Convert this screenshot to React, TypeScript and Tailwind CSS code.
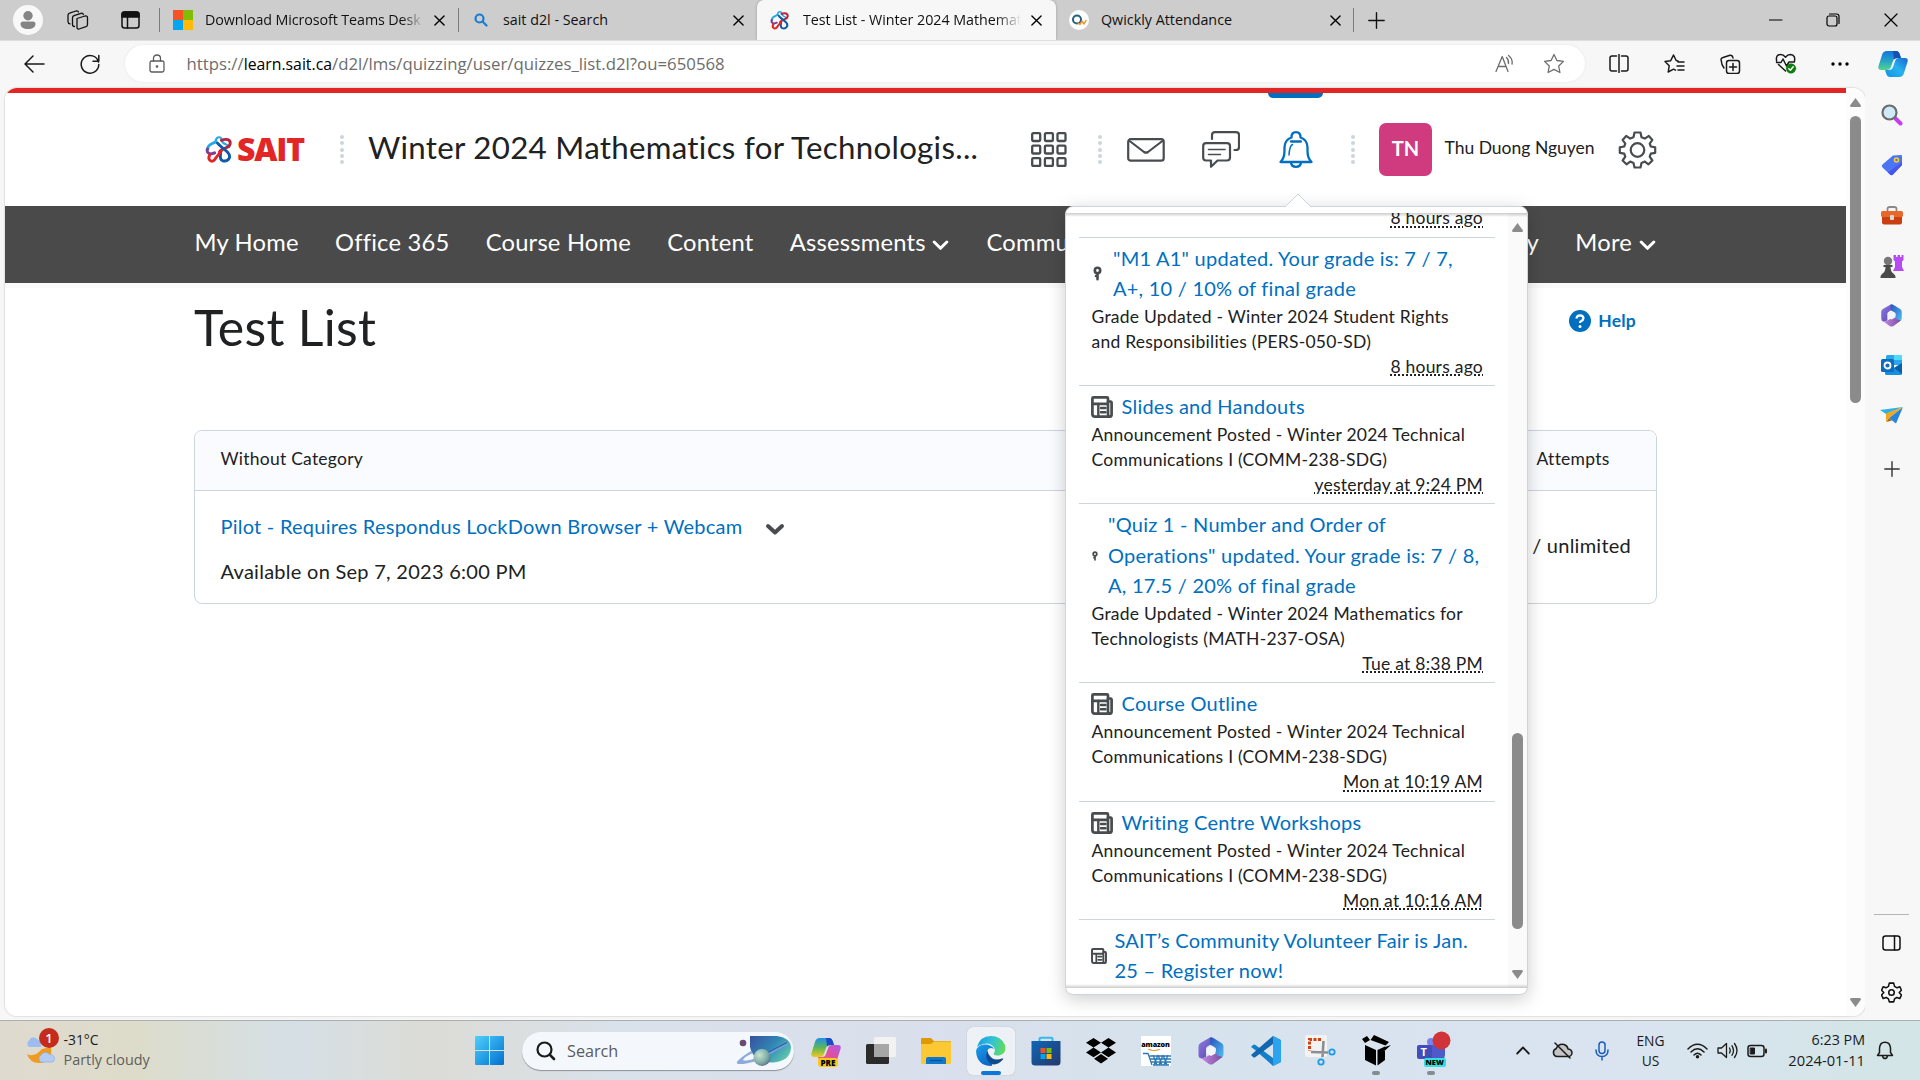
import React from "react";

type IconProps = {
  w: number;
  h: number;
  box?: string;
  children: React.ReactNode;
  className?: string;
  sw?: number;
};

function Icon({ w, h, box, children, className = "", sw = 1.4 }: IconProps) {
  return (
    <svg
      width={w}
      height={h}
      viewBox={box ?? `0 0 ${w} ${h}`}
      fill="none"
      stroke="currentColor"
      strokeWidth={sw}
      strokeLinecap="round"
      strokeLinejoin="round"
      className={`shrink-0 ${className}`}
    >
      {children}
    </svg>
  );
}

function SaitMark({ w, h }: { w: number; h: number }) {
  return (
    <Icon w={w} h={h} box="0 0 28 28" sw={3}>
      <path d="M3 14 C2 9 8 9 11.500 6" stroke="#27a9e1" />
      <path d="M11 7 C11 1 17 0 17.500 5 C18 10 24 8 25 12" stroke="#27a9e1" strokeWidth="2.200" />
      <path d="M17 5 C22 3 27 4 26 9 C25 14 18 12 15 17" stroke="#b5253c" />
      <path d="M2.500 14 C1 19 6 20 10 18" stroke="#7b3f98" />
      <path d="M13 8 C16 12 21 14 24 18 C28 23 23 28 18 26 C14 24 17 20 16 17" stroke="#0e5ca8" />
      <path d="M5 20 C2 25 7 29 10 25 C12 22 14 20 17 16" stroke="#e32526" />
    </Icon>
  );
}

function CloseX({ s = 11 }: { s?: number }) {
  return (
    <Icon w={s} h={s} box="0 0 12 12" sw={1.5} className="text-black">
      <path d="M1 1 L11 11 M11 1 L1 11" />
    </Icon>
  );
}

function TabBar() {
  return (
    <div className="flex h-10 shrink-0 items-center bg-[#cdcdcd] text-[14.3px] text-[#111]">
      <div className="ml-[13px] flex h-[30px] w-[30px] items-center justify-center rounded-full bg-[#f8f8f8]">
        <svg width="16" height="18" viewBox="0 0 16 18" fill="#858585">
          <circle cx="8" cy="4.7" r="4.7" />
          <path d="M3 10.5h10a2.5 2.5 0 0 1 2.5 2.5c0 3-3 5-7.500 5S.5 16 .5 13A2.500 2.500 0 0 1 3 10.500z" />
        </svg>
      </div>
      <Icon w={22} h={20} className="ml-[24px] text-[#111]" sw={1.3}>
        <path d="M10 8.500 L18 6 Q20.500 5.500 20.500 7.800 V14.500 Q20.500 16 19 16.600 L12 19 Q10 19.400 10 17.500 Z" />
        <path d="M7.500 16.500 Q5.500 16.500 5.500 14.500 V8 Q5.500 6.300 7 5.700 L14 3.300 Q16 2.800 16.300 4.500" />
        <path d="M3 13.800 Q1 13.500 1 11.500 V5.500 Q1 3.700 2.600 3.200 L9 1 Q11 .5 11.500 2" />
      </Icon>
      <Icon w={19} h={18} className="ml-[32px] text-[#111]" sw={1.5}>
        <rect x="1" y="1" width="17" height="16" rx="2.500" />
        <path d="M1 3.500 Q1 1 3.500 1 H15.500 Q18 1 18 3.500 V6 H1 Z" fill="currentColor" />
        <path d="M6.500 6 V17" />
      </Icon>
      <div className="ml-[19px] h-6 w-px bg-[#7c7c7c]" />
      <div className="ml-[13px] grid h-5 w-5 grid-cols-2 grid-rows-2">
        <i className="bg-[#f35325]" />
        <i className="bg-[#81bc06]" />
        <i className="bg-[#05a6f0]" />
        <i className="bg-[#ffba08]" />
      </div>
      <div className="ml-3 w-[218px] overflow-hidden whitespace-nowrap bg-linear-to-r from-[#111] from-90% to-[#cdcdcd] bg-clip-text tracking-[-0.1px] text-transparent">
        Download Microsoft Teams Desk
      </div>
      <div className="ml-[11px]">
        <CloseX />
      </div>
      <div className="ml-[13px] h-6 w-px bg-[#7c7c7c]" />
      <Icon w={14} h={14} className="ml-[15px] text-[#1b7cd3]" sw={2.200}>
        <circle cx="5.500" cy="5.500" r="4" />
        <path d="M8.800 8.800 L12.500 12.500" />
      </Icon>
      <div className="ml-[15px] w-[229px]">sait d2l - Search</div>
      <div className="ml-px">
        <CloseX />
      </div>
      <div className="ml-[13px] flex h-10 w-[299px] items-center rounded-t-[7px] bg-[#f7f7f7] shadow-[0_0_3px_rgba(0,0,0,0.25)]">
        <div className="ml-[13px]">
          <SaitMark w={19} h={20} />
        </div>
        <div className="ml-[14px] w-[218px] overflow-hidden whitespace-nowrap bg-linear-to-r from-[#111] from-88% to-[#f7f7f7] bg-clip-text tracking-[-0.04px] text-transparent">
          Test List - Winter 2024 Mathemat
        </div>
        <div className="ml-[10px]">
          <CloseX />
        </div>
      </div>
      <div className="ml-[13px] flex h-5 w-5 items-center justify-center rounded-full bg-white">
        <Icon w={16} h={12} sw={2}>
          <circle cx="6" cy="5.500" r="4" stroke="#24607f" />
          <path d="M7 9 L9 10.500 L11 7 L13 10 L15 6.500" stroke="#f0912d" strokeWidth="1.500" />
        </Icon>
      </div>
      <div className="ml-3 w-[228px]">Qwickly Attendance</div>
      <div className="ml-px">
        <CloseX />
      </div>
      <div className="ml-[12px] h-6 w-px bg-[#7c7c7c]" />
      <Icon w={17} h={17} className="ml-[14px] text-[#111]">
        <path d="M8.500 .8 V16.200 M.8 8.500 H16.200" />
      </Icon>
      <Icon w={14} h={14} className="ml-auto text-black" sw={1.2}>
        <path d="M.5 7 H13" />
      </Icon>
      <Icon w={14} h={14} className="ml-[43px] text-black" sw={1.2}>
        <rect x="1" y="3" width="10" height="10" rx="2" />
        <path d="M3.500 1 H10.500 Q13 1 13 3.500 V10.500" />
      </Icon>
      <Icon w={14} h={14} className="ml-[44px] mr-[22px] text-black" sw={1.200}>
        <path d="M1 1 L13 13 M13 1 L1 13" />
      </Icon>
    </div>
  );
}

function CopilotMark({ pre = false }: { pre?: boolean }) {
  return (
    <svg width="30" height="28" viewBox="0 0 30 28" className="shrink-0">
      <defs>
        <linearGradient id={pre ? "ca1" : "ca"} x1="0" y1="0" x2="0" y2="1">
          <stop offset="0" stopColor={pre ? "#1f8fe8" : "#1273dc"} />
          <stop offset=".5" stopColor={pre ? "#5bb65a" : "#25a0c9"} />
          <stop offset="1" stopColor={pre ? "#f3c91c" : "#52d68d"} />
        </linearGradient>
        <linearGradient id={pre ? "cb1" : "cb"} x1="1" y1="0" x2="0" y2="1">
          <stop offset="0" stopColor={pre ? "#b05be8" : "#1b66d2"} />
          <stop offset=".5" stopColor={pre ? "#e0509b" : "#27b3ee"} />
          <stop offset="1" stopColor={pre ? "#f5803c" : "#138fe5"} />
        </linearGradient>
      </defs>
      <path d="M9 1 H18 Q21 1 22 5 L23 8 H19 Q16 8 15 11 L12.500 18 Q12 20 9 20 H3 Q-.5 20 .5 16 L4 5 Q5 1 9 1Z" fill={`url(#${pre ? "ca1" : "ca"})`} />
      <path d="M21 27 H12 Q9 27 8 23 L7 20 H11 Q14 20 15 17 L17.500 10 Q18 8 21 8 H27 Q30.500 8 29.500 12 L26 23 Q25 27 21 27Z" fill={`url(#${pre ? "cb1" : "cb"})`} />
      <path d="M15 1 H18 Q21 1 22 5 L23 8 H19 Q17 8 16 9.500 Z" fill={pre ? "#1b49c9" : "#174fb5"} />
    </svg>
  );
}

function Toolbar() {
  return (
    <div className="flex h-12 shrink-0 items-center border-t border-[#dedede] bg-[#f7f7f7] pb-[2px] text-[#1a1a1a]">
      <Icon w={21} h={18} className="ml-[24px]" sw={1.5}>
        <path d="M20 9 H1 M9 1 L1 9 L9 17" />
      </Icon>
      <Icon w={20} h={20} className="ml-[35px]" sw={1.500}>
        <path d="M18.500 8 A8.800 8.800 0 1 0 18.800 10.500 M18.800 1.500 V7.300 H13" />
      </Icon>
      <div className="ml-[25px] flex h-[37px] w-[1460px] items-center rounded-full bg-white text-[16.75px] text-[#6d6d6d] shadow-[0_0_3px_rgba(0,0,0,0.08)]">
        <Icon w={16} h={19} className="ml-[24px] text-[#5c5c5c]" sw={1.300}>
          <rect x="1" y="7" width="14" height="11" rx="1.800" />
          <path d="M4.500 7 V4.500 Q4.500 1 8 1 T11.500 4.500 V7" />
          <circle cx="8" cy="12.500" r=".7" fill="currentColor" />
        </Icon>
        <div className="ml-[21.500px] whitespace-pre">
          https://<span className="text-[15.8px] text-black">learn.sait.ca</span>
          <span className="tracking-[0.020px]">/d2l/lms/quizzing/user/quizzes_list.d2l?ou=650568</span>
        </div>
        <Icon w={20} h={19} className="ml-auto text-[#6d6d6d]" sw={1.300}>
          <path d="M1 17.500 L7.200 2.500 L13 17.500 M3.200 12.500 H11" />
          <path d="M11.500 3.500 Q14 6 13.500 9.500 M13.500 1.500 Q18 5 17 10" />
        </Icon>
        <Icon w={22} h={21} className="ml-[28px] mr-[20px] text-[#6d6d6d]" sw={1.300}>
          <path d="M11 1.500 L13.900 7.500 L20.500 8.400 L15.700 13 L16.900 19.500 L11 16.400 L5.100 19.500 L6.300 13 L1.500 8.400 L8.100 7.500Z" />
        </Icon>
      </div>
      <Icon w={20} h={19} className="ml-[24px]" sw={1.500}>
        <path d="M7.500 2 H3 Q1 2 1 4 V15 Q1 17 3 17 H7.500 M12.500 2 H17 Q19 2 19 4 V15 Q19 17 17 17 H12.500 M10 .5 V18.500" />
      </Icon>
      <Icon w={21} h={20} className="ml-[35px]" sw={1.500}>
        <path d="M14 7 L12.200 6.500 L9.500 1 L6.700 6.700 L1 7.500 L5.200 11.800 L4.200 18 L9.500 15.200 L11.500 16.200 M14 8 H20 M13 12 H20 M14 16 H20" />
      </Icon>
      <Icon w={21} h={20} className="ml-[35px]" sw={1.500}>
        <rect x="6.500" y="6.500" width="13" height="13" rx="2.500" />
        <path d="M13 9.500 V16.500 M9.500 13 H16.500 M4 14 Q1.500 11 1 5.500 Q1 4 3 3.500 L10 1.200 Q12.500 1 13 4" />
      </Icon>
      <Icon w={22} h={21} className="ml-[34px]" sw={1.500}>
        <path d="M10.500 18 L3.500 11.500 M1.600 8 Q.5 1.500 5.500 1.500 Q8.500 1.500 10.500 4.200 Q12.500 1.500 15.500 1.500 Q21 2 19.300 9 M1.500 9.500 H6 L8 6 L11.500 13 L14 9 H19" />
        <circle cx="16" cy="15.500" r="4.800" fill="#107c10" stroke="#107c10" strokeWidth=".5" />
        <path d="M13.800 15.700 L15.400 17.200 L18.200 13.800" stroke="#fff" />
      </Icon>
      <svg width="18" height="4" viewBox="0 0 18 4" className="ml-[34px] shrink-0">
        <circle cx="2" cy="2" r="1.700" />
        <circle cx="9" cy="2" r="1.700" />
        <circle cx="16" cy="2" r="1.700" />
      </svg>
      <div className="ml-[29px]">
        <CopilotMark />
      </div>
    </div>
  );
}

function Dots() {
  return (
    <div className="flex w-1 shrink-0 flex-col gap-[2.300px]">
      <i className="h-1 w-1 rounded-full bg-[#cdd5dc]" />
      <i className="h-1 w-1 rounded-full bg-[#cdd5dc]" />
      <i className="h-1 w-1 rounded-full bg-[#cdd5dc]" />
      <i className="h-1 w-1 rounded-full bg-[#cdd5dc]" />
      <i className="h-1 w-1 rounded-full bg-[#cdd5dc]" />
    </div>
  );
}

function Header() {
  return (
    <div className="flex h-[113px] shrink-0 items-center bg-white pl-[200px] text-[#494c4e]">
      <div className="flex w-[99px] shrink-0 items-center pb-[2px]">
        <SaitMark w={27} h={28} />
        <span className="ml-[5px] font-['Open_Sans'] text-[32px] leading-8 font-extrabold tracking-[-1.200px] text-[#e32526]">SAIT</span>
      </div>
      <div className="ml-[36px]">
        <Dots />
      </div>
      <div className="ml-[24px] w-[611px] shrink-0 pb-[5px] text-[31.250px] leading-10 tracking-[0.290px] whitespace-nowrap text-[#202122]">
        Winter 2024 Mathematics for Technologis...
      </div>
      <Icon w={36} h={35} className="ml-[52px]" sw={2.300}>
        {[1.200, 13.700, 26.200].map((y) =>
          [1.200, 13.900, 26.500].map((x) => <rect key={`${x}-${y}`} x={x} y={y} width="8" height="7.800" rx="1" />)
        )}
      </Icon>
      <div className="ml-[31px]">
        <Dots />
      </div>
      <Icon w={38} h={24} className="ml-[25px]" sw={2.200}>
        <rect x="1.200" y="1.200" width="35.500" height="21.500" rx="2.500" />
        <path d="M2 2.500 L17 14 Q19 15.300 21 14 L36 2.500" />
      </Icon>
      <Icon w={38} h={37} className="ml-[37px]" sw={2.200}>
        <path d="M10 8 V4 Q10 1.200 13 1.200 H34 Q37 1.200 37 4 V16 Q37 19 34 19 H32.500" />
        <path d="M4 12.200 H25 Q28 12.200 28 15 V26.500 Q28 29.500 25 29.500 H15.500 L9 35.800 V29.500 H4 Q1.200 29.500 1.200 26.500 V15 Q1.200 12.200 4 12.200Z" />
        <path d="M6.500 18.500 H23 M6.500 23.500 H18.500" strokeWidth="1.600" />
      </Icon>
      <Icon w={34} h={37} className="ml-[39px] text-[#006fbf]" sw={2.300}>
        <path d="M1.500 31 Q5.500 27 5.500 20 V16 Q6 8.500 12.500 6.500 Q12.500 1.200 17 1.200 T21.500 6.500 Q28 8.500 28.500 16 V20 Q28.500 27 32.500 31 Z" />
        <path d="M12 31.500 Q12.500 35.800 17 35.800 T22 31.500 M12 10.500 H22" />
        <path d="M10 24 Q10.500 15 13.500 13.500" strokeWidth="1.500" />
      </Icon>
      <div className="ml-[38px]">
        <Dots />
      </div>
      <div className="ml-[24px] flex h-[53px] w-[53px] shrink-0 items-center justify-center rounded-[7px] bg-[#d03a7f] pb-1 text-[20px] font-bold text-white">
        TN
      </div>
      <div className="ml-[12.500px] w-[149.500px] shrink-0 pb-[3px] text-[17.500px] whitespace-nowrap text-[#202122]">Thu Duong Nguyen</div>
      <Icon w={39} h={38} box="0 0 38 38" className="ml-[24px]" sw={2.200}>
        <circle cx="19" cy="19" r="6.800" />
        <path d="M16 1.500 H22 L23 6.200 L26.300 7.600 L30.300 4.900 L33.900 8.900 L31.200 12.700 L32.300 15.500 L36.700 16.300 V21.800 L32.300 22.700 L31.200 25.600 L33.900 29.500 L30 33.300 L26.300 30.600 L23 32 L22 36.500 H16 L15 32 L11.700 30.600 L8 33.300 L4.100 29.500 L6.800 25.600 L5.700 22.700 L1.300 21.800 V16.300 L5.700 15.500 L6.800 12.700 L4.100 8.900 L7.700 4.900 L11.700 7.600 L15 6.200 Z" />
      </Icon>
    </div>
  );
}

function Chevron({ className = "" }: { className?: string }) {
  return (
    <Icon w={17} h={11} sw={3} className={className}>
      <path d="M2.200 2 L8.500 8.300 L14.800 2" />
    </Icon>
  );
}

function NavBar() {
  return (
    <div className="flex h-[77px] shrink-0 items-center gap-[36.300px] bg-[#4a4a4a] pr-[190px] pb-[4px] pl-[189.500px] text-[23.750px] tracking-[0.200px] whitespace-nowrap text-white">
      <span>My Home</span>
      <span>Office 365</span>
      <span>Course Home</span>
      <span>Content</span>
      <span className="flex items-center">
        Assessments
        <Chevron className="mt-[6px] mr-[1.500px] ml-[6px]" />
      </span>
      <span>Community</span>
      <span className="ml-auto">y</span>
      <span className="flex items-center">
        More
        <Chevron className="mt-[6px] ml-[7px]" />
      </span>
    </div>
  );
}

function QuizTable() {
  return (
    <div className="mx-[189px] mt-[73px] overflow-hidden rounded-lg border border-[#cdd5dc]">
      <div className="flex h-[60px] items-center justify-between border-b border-[#cdd5dc] bg-[#f9fbff] pr-[46.500px] pb-[3px] pl-[25.500px] text-[17.500px] tracking-[0.240px]">
        <span>Without Category</span>
        <span>Attempts</span>
      </div>
      <div className="flex h-[112px] items-center justify-between pr-[25px] pl-[25.500px] text-[20px] tracking-[0.240px]">
        <div className="flex flex-col gap-[15px] pt-[2px]">
          <div className="flex items-center text-[#006fbf]">
            Pilot - Requires Respondus LockDown Browser + Webcam
            <Icon w={20} h={13} sw={4} className="mt-[8px] ml-[23px] text-[#494c4e]">
              <path d="M3 3 L10 9.500 L17 3" />
            </Icon>
          </div>
          <div className="tracking-[0.270px]">Available on Sep 7, 2023 6:00 PM</div>
        </div>
        <span className="pb-[5px]">/ unlimited</span>
      </div>
    </div>
  );
}

type Note = { kind: "news" | "grade"; size: number; title: string[]; desc: string[]; time: string };

const notes: Note[] = [
  {
    kind: "grade",
    size: 15,
    title: ['"M1 A1" updated. Your grade is: 7 / 7,', "A+, 10 / 10% of final grade"],
    desc: ["Grade Updated - Winter 2024 Student Rights", "and Responsibilities (PERS-050-SD)"],
    time: "8 hours ago",
  },
  {
    kind: "news",
    size: 22,
    title: ["Slides and Handouts"],
    desc: ["Announcement Posted - Winter 2024 Technical", "Communications I (COMM-238-SDG)"],
    time: "yesterday at 9:24 PM",
  },
  {
    kind: "grade",
    size: 10,
    title: ['"Quiz 1 - Number and Order of', 'Operations" updated. Your grade is: 7 / 8,', "A, 17.5 / 20% of final grade"],
    desc: ["Grade Updated - Winter 2024 Mathematics for", "Technologists (MATH-237-OSA)"],
    time: "Tue at 8:38 PM",
  },
  {
    kind: "news",
    size: 22,
    title: ["Course Outline"],
    desc: ["Announcement Posted - Winter 2024 Technical", "Communications I (COMM-238-SDG)"],
    time: "Mon at 10:19 AM",
  },
  {
    kind: "news",
    size: 22,
    title: ["Writing Centre Workshops"],
    desc: ["Announcement Posted - Winter 2024 Technical", "Communications I (COMM-238-SDG)"],
    time: "Mon at 10:16 AM",
  },
];

function NewsIcon({ size }: { size: number }) {
  return (
    <Icon w={size} h={size} box="0 0 22 22" sw={2.700} className="mt-[2px] text-[#494c4e]">
      <path d="M1.400 2.500 Q1.400 1.400 2.500 1.400 H16 Q17 1.400 17 2.500 V18 Q17 20.600 19 20.600 H4 Q1.400 20.600 1.400 18 Z" />
      <path d="M17 5.500 H19.500 Q20.600 5.500 20.600 7 V18.500 Q20.600 20.600 19 20.600" />
      <path d="M1.500 7.800 H16.500" />
      <path d="M7.300 8 V20 M10 12 H14.500 M10 16.200 H14.500" strokeWidth="2.400" />
    </Icon>
  );
}

function PinIcon({ size }: { size: number }) {
  return (
    <Icon w={Math.round(size * 0.62)} h={size} box="0 0 9 14" sw={2.600} className="mt-[2px] text-[#494c4e]">
      <circle cx="4.500" cy="4" r="2.700" />
      <path d="M4.500 7 V12.700 M3 9.500 H4.500" />
    </Icon>
  );
}

function Time({ children }: { children: string }) {
  return (
    <div className="flex h-[25px] items-center justify-end">
      <span className="underline decoration-dotted decoration-2 underline-offset-[2px]">{children}</span>
    </div>
  );
}

function NoteTitle({ kind, size, lines }: { kind: "news" | "grade"; size: number; lines: string[] }) {
  const lead = kind === "news" ? (size > 18 ? "w-[30.500px]" : "w-[23.500px]") : size > 10 ? "w-[22px] pl-[2px]" : "w-[17px] pl-[1px]";
  return (
    <div className="flex items-center text-[20px] leading-[30.200px] tracking-[0.240px] text-[#006fbf]">
      <span className={`flex shrink-0 ${lead}`}>{kind === "news" ? <NewsIcon size={size} /> : <PinIcon size={size} />}</span>
      <span>
        {lines.map((l) => (
          <span key={l} className="block whitespace-nowrap">
            {l}
          </span>
        ))}
      </span>
    </div>
  );
}

function ScrollArrow({ up = false }: { up?: boolean }) {
  return (
    <svg width="11" height="9" viewBox="0 0 11 9" className="shrink-0">
      <path d={up ? "M5.500 0 L11 7.500 Q11 9 9.500 9 H1.500 Q0 9 0 7.500 Z" : "M5.500 9 L11 1.500 Q11 0 9.500 0 H1.500 Q0 0 0 1.500 Z"} fill="#8b8b8b" />
    </svg>
  );
}

function Alerts() {
  return (
    <div className="absolute top-[118px] left-[1060px] z-10 flex h-[789px] w-[463px] flex-col rounded-lg border border-[#cdd5dc] bg-white shadow-[0_4px_18px_rgba(0,0,0,0.2)]">
      <svg width="28" height="15" viewBox="0 0 28 15" className="absolute -top-[14px] left-[218px]">
        <path d="M1 14 L14 1 L27 14 V15 H1Z" fill="#fff" />
        <path d="M1 14 L14 1 L27 14" fill="none" stroke="#cdd5dc" />
      </svg>
      <div className="h-[6px] shrink-0" />
      <div className="relative flex h-[775px] shrink-0 overflow-hidden">
        <div className="w-[442px] pl-[13px] text-[17.500px] leading-[25px] tracking-[0.235px] text-[#202122]">
          <div className="flex h-[24.500px] w-[416px] flex-col justify-end border-b border-[#cdd5dc] pr-[12px] pb-[6.500px] pl-[10px]">
            <Time>8 hours ago</Time>
          </div>
          {notes.map((n) => (
            <div key={n.title[0]} className="w-[416px] border-b border-[#cdd5dc] pt-[5px] pr-[12px] pb-[6.500px] pl-[12px]">
              <NoteTitle kind={n.kind} size={n.size} lines={n.title} />
              <div className="mt-[0.700px] pl-[0.500px]">
                {n.desc.map((d) => (
                  <div key={d} className="whitespace-nowrap">
                    {d}
                  </div>
                ))}
              </div>
              <Time>{n.time}</Time>
            </div>
          ))}
          <div className="pt-[5px] pl-[12px]">
            <NoteTitle kind="news" size={16} lines={["SAIT’s Community Volunteer Fair is Jan.", "25 – Register now!"]} />
          </div>
        </div>
        <div className="flex w-[19px] flex-col items-center bg-[#fafafa] pt-[10px] pr-[1px] pb-[9px]">
          <ScrollArrow up />
          <div className="mt-[501px] h-[196px] w-[11px] rounded-full bg-[#8b8b8b]" />
          <div className="mt-auto">
            <ScrollArrow />
          </div>
        </div>
        <div className="absolute inset-x-0 top-0 h-1 bg-linear-to-b from-black/20 to-transparent" />
        <div className="absolute inset-x-0 bottom-0 h-1 bg-linear-to-t from-black/20 to-transparent" />
      </div>
    </div>
  );
}

function Office({ s }: { s: number }) {
  return (
    <svg width={s} height={s} viewBox="0 0 28 28" className="shrink-0">
      <defs>
        <linearGradient id="o1" x1="0" y1="0" x2="1" y2="1">
          <stop offset="0" stopColor="#8f7be0" />
          <stop offset="1" stopColor="#5a48b0" />
        </linearGradient>
        <linearGradient id="o2" x1="0" y1="0" x2="1" y2="1">
          <stop offset="0" stopColor="#2a4fc0" />
          <stop offset="1" stopColor="#4fc3f0" />
        </linearGradient>
        <linearGradient id="o3" x1="0" y1="0" x2="1" y2="0">
          <stop offset="0" stopColor="#c68be8" />
          <stop offset="1" stopColor="#7a4d9e" />
        </linearGradient>
      </defs>
      <path d="M13 .5 L3.500 6 Q1.500 7.200 1.500 9.500 V18 Q1.500 21 4.500 21.500 L9 20 V12 Q9 10 11 9 L15.500 6.500 V2Z" fill="url(#o1)" />
      <path d="M13 .5 Q14.500 0 16 .8 L24.500 6 Q26.500 7.200 26.500 9.500 V18 Q26 20 24 21 L19 18 V12.500 Q19 10.800 17.500 10 L13 7.500Z" fill="url(#o2)" />
      <path d="M3 20.500 Q6 22 9 20 L19 14.500 V16 Q19 17.500 21 18.500 L25.500 20 L16 27 Q14 28 12 27Z" fill="url(#o3)" />
      <path d="M14 9 L18.500 11.500 V16.500 L14 19 L9.500 16.500 V11.500Z" fill="#f3f4f8" />
    </svg>
  );
}

function Sidebar() {
  return (
    <div className="flex w-[54px] shrink-0 flex-col items-center bg-[#f7f7f7] pt-[16px] pr-[1px]">
      <div className="flex h-[50.200px] items-start">
        <svg width="22" height="22" viewBox="0 0 22 22">
          <path d="M14.500 14.500 L19.500 19.500" stroke="#c63cf0" strokeWidth="4" strokeLinecap="round" />
          <circle cx="8.500" cy="8.500" r="7" fill="#cfe9f8" stroke="#6b6b6b" strokeWidth="2.200" />
        </svg>
      </div>
      <div className="flex h-[50.200px] items-start">
        <svg width="22" height="22" viewBox="0 0 22 22">
          <path d="M12 1.500 L20 1 Q21 1 21 2 V11 L12 20.500 Q10.500 22 9 20.500 L1.500 13.500 Q0 12 1.500 10.500Z" fill="#4b75f5" />
          <path d="M21 8 V11 L12 20.500 Q10.500 22 9 20.500 L7 18.500Z" fill="#4a55ee" />
          <circle cx="15.500" cy="6" r="2" fill="#4b75f5" stroke="#f8cf2c" strokeWidth="1.600" />
        </svg>
      </div>
      <div className="flex h-[49.200px] items-start pt-px">
        <svg width="24" height="22" viewBox="0 0 24 22">
          <path d="M7.500 6 V4 Q7.500 2 9.500 2 H14.500 Q16.500 2 16.500 4 V6" fill="none" stroke="#8a8a8a" strokeWidth="1.800" />
          <rect x="1" y="6" width="22" height="6" rx="1.500" fill="#e8672a" />
          <path d="M2 12 H22 V17.500 Q22 19.500 20 19.500 H4 Q2 19.500 2 17.500Z" fill="#c93f10" />
          <rect x="10" y="10" width="4" height="5" rx="1" fill="#d8d8d8" />
        </svg>
      </div>
      <div className="flex h-[50.200px] items-start">
        <svg width="24" height="25" viewBox="0 0 24 25">
          <path d="M13.500 1 H16 V3 H17.500 V1 H20 V3 H21.500 V1 H23.500 V6 L22 7.500 V13 L24 17 H13 L15 13 V7.500 L13.500 6Z" fill="#b64bf2" />
          <circle cx="8" cy="7" r="4.200" fill="#777" />
          <path d="M3.500 11 H12.500 V13 H10.500 Q10.500 18 14 20 Q16 22 15.500 24 H.5 Q0 22 2 20 Q5.500 18 5.500 13 H3.500Z" fill="#4b4b4b" />
        </svg>
      </div>
      <div className="flex h-[50.200px] items-start">
        <Office s={23} />
      </div>
      <div className="flex h-[50.200px] items-start">
        <svg width="22" height="22" viewBox="0 0 22 22">
          <rect x="5" y="1" width="16" height="10" rx="1.500" fill="#28a8ea" />
          <path d="M13 1 H19.500 Q21 1 21 2.500 V6 H13Z" fill="#50d9ff" />
          <path d="M4 9 L13 14 L21 9 V19.500 Q21 21 19.500 21 H5.500 Q4 21 4 19.500Z" fill="#1490df" />
          <path d="M13 14 L21 9 V20Z" fill="#0a5ea8" />
          <rect x="0" y="5" width="13" height="13" rx="1.500" fill="#0f6cbd" />
          <circle cx="6.500" cy="11.500" r="3" fill="none" stroke="#fff" strokeWidth="1.800" />
        </svg>
      </div>
      <div className="flex h-[55px] items-start">
        <svg width="23" height="22" viewBox="0 0 23 22">
          <path d="M0 6 L23 3 L6 10Z" fill="#30b0e8" />
          <path d="M23 3 L16 19.500 L9 14Z" fill="#2584e0" />
          <path d="M6 9.500 L23 3 L9 14 L6 18Z" fill="#f0a71c" />
          <path d="M6.500 18 L9 14 L12 16.500Z" fill="#a76b0a" />
        </svg>
      </div>
      <Icon w={16} h={16} sw={1.400} className="mt-[2px] text-[#333]">
        <path d="M8 .8 V15.200 M.8 8 H15.200" />
      </Icon>
      <div className="mt-auto h-px w-[35px] bg-[#b5b5b5]" />
      <Icon w={19} h={16} sw={1.500} className="mt-[20px] text-[#111]">
        <rect x="1" y="1" width="17" height="14" rx="2.500" />
        <path d="M12.500 1 V15" />
      </Icon>
      <Icon w={21} h={21} box="0 0 38 38" sw={2.800} className="mt-[31px] mb-[17px] text-[#111]">
        <circle cx="19" cy="19" r="5" />
        <path d="M15 2 H23 L24.500 8 L29 10.500 L34 8.500 L37 15 L33 19 L37 23.500 L34 30 L28.500 28 L24.500 30.500 L23 36 H15 L13.500 30.500 L9.500 28 L4 30 L1 23.500 L5 19 L1 15 L4 8.500 L9 10.500 L13.500 8 Z" />
      </Icon>
    </div>
  );
}

function EdgeLogo() {
  return (
    <svg width="30" height="30" viewBox="0 0 30 30">
      <defs>
        <linearGradient id="e1" x1="0" y1=".3" x2="1" y2=".5">
          <stop offset="0" stopColor="#1a9be0" />
          <stop offset=".5" stopColor="#2fc3d8" />
          <stop offset="1" stopColor="#62dc5a" />
        </linearGradient>
        <linearGradient id="e2" x1="0" y1="0" x2=".6" y2="1">
          <stop offset="0" stopColor="#1ba0e8" />
          <stop offset="1" stopColor="#0a66c8" />
        </linearGradient>
      </defs>
      <path d="M1 11 Q4 0 15 0 Q25 0 29 9 Q31 18 23 19.500 Q19 20 17.500 18 Q20 15 18 11.500 Q14 6 7 8 Q2.500 9.500 1 11Z" fill="url(#e1)" />
      <path d="M0 15 Q1 9.500 8 8.500 Q15 8 18 13 Q13 10.500 11 15 Q9.500 22 16 27 Q17 29 15.500 30 Q1 30 0 15Z" fill="url(#e2)" />
      <path d="M11.500 14 Q8 22 14 27 Q20 31 27 23.500 Q28 22 26 22.500 Q17 26 12.500 18 Q11.500 16 11.500 14Z" fill="#114a8b" />
    </svg>
  );
}

function Slot({ children, active = false, running = false }: { children: React.ReactNode; active?: boolean; running?: boolean }) {
  return (
    <div className="flex w-[55px] shrink-0 justify-center">
      <div className={`relative flex h-12 w-12 items-center justify-center rounded-md ${active ? "bg-white/55 shadow-[0_0_1px_rgba(0,0,0,0.3)]" : ""}`}>
        {children}
        {active && <i className="absolute bottom-0 left-[14px] h-1 w-5 rounded-full bg-[#0a78d6]" />}
        {running && <i className="absolute bottom-0 left-[20px] h-1 w-2 rounded-full bg-[#868b92]" />}
      </div>
    </div>
  );
}

function Taskbar() {
  return (
    <div className="flex h-[60px] shrink-0 items-center border-t border-[#abafb1] bg-[linear-gradient(90deg,#dfdacf_0,#dddcca_130px,#d5dfe5_290px,#dcdcd6_430px,#d9e1ea_620px,#dadfec_900px,#d6e2ec_1150px,#dae4f1_1600px,#d3e5e6_1900px)] text-[14.300px] text-[#1b1b1b]">
      <div className="relative ml-[25px] h-[34px] w-[38.500px] shrink-0">
        <svg width="32" height="30" viewBox="0 0 32 30" className="mt-[2px]">
          <path d="M4 11 A4 4 0 0 1 4 4.500 Q7 -1 12 3 Q16 4 16 11Z" fill="#9dbcf0" />
          <path d="M2 18 Q9 22 17 13 L26 11 Q28 27 14 27 Q5 27 2 18Z" fill="#f09a1f" />
          <path d="M16 26 A4 4 0 0 1 16 19 Q20 14 24 18 Q30 19 29.500 23 Q29 26 27 26Z" fill="#b3ccf4" stroke="#87a7e4" strokeWidth=".6" />
        </svg>
        <div className="absolute -top-[6px] left-[14px] flex h-5 w-5 items-center justify-center rounded-full bg-[#c42b1c] text-[13px] leading-5 font-semibold text-white">1</div>
      </div>
      <div className="w-[100.500px] shrink-0 pb-[2px] leading-[20px]">
        <div className="text-[13.900px]">-31°C</div>
        <div className="text-[14.400px] text-[#5e5e5a]">Partly cloudy</div>
      </div>
      <svg width="29" height="29" viewBox="0 0 29 29" className="ml-[311px] shrink-0">
        <defs>
          <linearGradient id="win" x1="0" y1="0" x2="1" y2="1">
            <stop offset="0" stopColor="#4fd0fb" />
            <stop offset="1" stopColor="#0070d0" />
          </linearGradient>
        </defs>
        <path d="M0 1 Q0 0 1 0 H14 V14 H0Z M15 0 H28 Q29 0 29 1 V14 H15Z M0 15 H14 V29 H1 Q0 29 0 28Z M15 15 H29 V28 Q29 29 28 29 H15Z" fill="url(#win)" />
      </svg>
      <div className="ml-[18px] flex h-[38px] w-[272px] shrink-0 items-center rounded-full bg-[#f4f7fb] shadow-[0_1px_1px_rgba(0,0,0,0.35)]">
        <Icon w={20} h={20} sw={2.200} className="ml-[14px] text-[#1c1c1c]">
          <circle cx="8.500" cy="8.500" r="7" />
          <path d="M13.700 13.700 L18 18" strokeWidth="2.600" />
        </Icon>
        <div className="ml-[11px] pt-px text-[16.200px] text-[#5b5b5b]">Search</div>
        <svg width="58" height="32" viewBox="0 0 58 32" className="mr-[1px] ml-auto">
          <defs>
            <linearGradient id="pl" x1="0" y1="0" x2="1" y2=".6">
              <stop offset="0" stopColor="#3b4f9c" />
              <stop offset=".55" stopColor="#2f86b5" />
              <stop offset="1" stopColor="#5cc4ae" />
            </linearGradient>
            <radialGradient id="moon" cx=".35" cy=".35" r=".8">
              <stop offset="0" stopColor="#c5e6cf" />
              <stop offset=".6" stopColor="#80aba6" />
              <stop offset="1" stopColor="#4e5d7d" />
            </radialGradient>
          </defs>
          <circle cx="8" cy="8" r="3.300" fill="#6b4a70" />
          <path d="M15 1 H42 Q56 3 56 13 Q55 26 38 27.500 Q18 28 15 12Z" fill="url(#pl)" />
          <path d="M16 16 Q0 26 2 28.500 Q6 30.500 22 26 L20 23.500 Q10 26.500 8 25 Q8 22.500 18 18Z" fill="#8ea9dc" />
          <path d="M33 17.500 L52 6.500 L54 9 L34 20Z" fill="#6f9fdc" />
          <path d="M52 7.500 L30 19" stroke="#3457a8" strokeWidth="1.300" />
          <circle cx="27" cy="22.500" r="8.500" fill="url(#moon)" />
        </svg>
      </div>
      <div className="ml-[4px] flex">
        <Slot>
          <div className="relative">
            <CopilotMark pre />
            <div className="absolute -bottom-[2px] left-[7px] rounded-[3px] bg-[#fbc91b] px-[3px] text-[8px] leading-[9px] font-extrabold text-black">PRE</div>
          </div>
        </Slot>
        <Slot>
          <svg width="30" height="30" viewBox="0 0 30 30">
            <rect x="0" y="8" width="23" height="20" rx="1.500" fill="#2b2b2b" />
            <rect x="8" y="1" width="22" height="20" rx="1.500" fill="#f2f2f2" />
            <path d="M8 8 H23 V21 H9 Q8 21 8 20Z" fill="#a6a6a6" />
          </svg>
        </Slot>
        <Slot>
          <svg width="30" height="28" viewBox="0 0 30 28">
            <path d="M0 2 Q0 1 1 1 H10 L13 4 H29 Q30 4 30 5 V12 H0Z" fill="#dd9a05" />
            <path d="M0 7 H10 L13 4.500 H29 Q30 4.500 30 5.500 V26 Q30 27 29 27 H1 Q0 27 0 26Z" fill="#fcc935" />
            <path d="M5 27 V22 Q5 20 7 20 H23 Q25 20 25 22 V27Z" fill="#0f79cf" />
            <path d="M9 23.500 H21" stroke="#0a4f91" strokeWidth="1.300" />
          </svg>
        </Slot>
        <Slot active>
          <EdgeLogo />
        </Slot>
        <Slot>
          <svg width="30" height="30" viewBox="0 0 30 30">
            <defs>
              <linearGradient id="st" x1="0" y1="0" x2="1" y2="1">
                <stop offset="0" stopColor="#0f66b8" />
                <stop offset="1" stopColor="#24386b" />
              </linearGradient>
            </defs>
            <path d="M8.500 6 V3 Q8.500 1.800 10 1.800 H20 Q21.500 1.800 21.500 3 V6" fill="none" stroke="#33b8f0" strokeWidth="2" />
            <path d="M.5 5 H29.500 V26 Q29.500 29.500 26 29.500 H4 Q.5 29.500 .5 26Z" fill="url(#st)" />
            <path d="M9.500 12 h5 v5 h-5z" fill="#f25022" />
            <path d="M15.500 12 h5 v5 h-5z" fill="#7fba00" />
            <path d="M9.500 18 h5 v5 h-5z" fill="#00a4ef" />
            <path d="M15.500 18 h5 v5 h-5z" fill="#ffb900" />
          </svg>
        </Slot>
        <Slot>
          <svg width="30" height="26" viewBox="0 0 30 26">
            <path d="M7.500 0 L15 4.800 L7.500 9.600 L0 4.800Z M22.500 0 L30 4.800 L22.500 9.600 L15 4.800Z M7.500 9.600 L15 14.400 L7.500 19.200 L0 14.400Z M22.500 9.600 L30 14.400 L22.500 19.200 L15 14.400Z M15 16 L22 20.800 L15 25.500 L8 20.800Z" />
          </svg>
        </Slot>
        <Slot>
          <div className="relative h-[30px] w-[30px] overflow-hidden bg-white">
            <div className="pt-[4px] text-center text-[7.200px] leading-[9px] font-extrabold tracking-[-0.100px] text-black">amazon</div>
            <svg width="30" height="17" viewBox="0 0 30 17">
              <path d="M7 0 Q13 3 19 0" fill="none" stroke="#f0962e" strokeWidth="1.200" />
              <path d="M2 4.500 H7 L11 16 M7.500 7 H30 M9 10 H30 M10 13 H30 M12 16 H28 M12 6 L16 16 M17 6 L13 16 M17 6 L21 16 M22 6 L18 16 M22 6 L26 16 M27 6 L23 16" stroke="#2c7ab5" strokeWidth="1.300" fill="none" />
            </svg>
          </div>
        </Slot>
        <Slot>
          <Office s={28} />
        </Slot>
        <Slot>
          <svg width="30" height="30" viewBox="0 0 30 30">
            <path d="M22 0 L29 3.500 Q30 4 30 5 V25 Q30 26 29 26.500 L22 30 L3.500 13.500 L0 11 L2 9 Q3 8 4.500 9 L22 22Z" fill="#1580c9" />
            <path d="M22 8 L4.500 21 Q3 22 2 21 L0 19 L22 0Z" fill="#1267ae" />
            <path d="M22 0 L29 3.500 Q30 4 30 5 V25 Q30 26 29 26.500 L22 30Z" fill="#2ba3ee" />
          </svg>
        </Slot>
        <Slot>
          <svg width="31" height="31" viewBox="0 0 31 31">
            <rect x="0" y="0" width="22" height="22" rx="2" fill="#f3f3f3" />
            <path d="M16 4.500 H4.500 V16" fill="none" stroke="#d4400d" strokeWidth="3" strokeDasharray="3 1.500" />
            <path d="M18.500 6 L17.500 22 M6 17 L23 17.500" stroke="#8b8f94" strokeWidth="2.600" />
            <circle cx="27" cy="17" r="2.700" fill="none" stroke="#1e9be8" strokeWidth="1.800" />
            <circle cx="16" cy="27" r="2.700" fill="none" stroke="#1e9be8" strokeWidth="1.800" />
          </svg>
        </Slot>
        <Slot running>
          <svg width="30" height="31" viewBox="0 0 30 31">
            <path d="M4 10 L15 15 V30.500 L4 25Z M16.500 15 L24 11.500 V25 L16.500 30.500Z M1 4 L6 1 L9 5 L4 8Z M13 0 L28 7 L24.500 10.500 L9.500 5Z M24 12 L30 10 L24 15.500 L20 16Z" />
          </svg>
        </Slot>
        <Slot running>
          <div className="relative top-[-2px] left-[4px] h-[36px] w-[36px]">
            <svg width="36" height="36" viewBox="0 0 36 36">
              <circle cx="14" cy="11" r="4" fill="#7b83eb" />
              <path d="M14 14 H28 V24 Q27 31 21 31 H14Z" fill="#5059c9" />
              <rect x="0" y="14" width="15" height="14" rx="2" fill="#444cb8" />
              <circle cx="24.500" cy="9.500" r="9" fill="#d13438" />
            </svg>
            <div className="absolute top-[14px] left-[4px] text-[11px] leading-[14px] font-bold text-white">T</div>
            <div className="absolute bottom-0 left-[7px] rounded-[2px] bg-[#2fe0e0] px-[2px] text-[7.600px] leading-[9px] font-extrabold text-black">NEW</div>
          </div>
        </Slot>
      </div>
      <Icon w={14} h={9} sw={1.800} className="ml-auto">
        <path d="M1.200 7.500 L7 1.500 L12.800 7.500" />
      </Icon>
      <Icon w={21} h={17} sw={1.500} className="ml-[22px]">
        <path d="M5 14.500 A4 4 0 0 1 4 6.800 Q7 1 12 2.500 Q15.500 3.500 16 7 Q20 7.500 20 11 Q19.500 14.500 16 14.500Z" fill="#c4c4c4" />
        <path d="M3 1 L18 16" />
      </Icon>
      <Icon w={14} h={20} sw={1.500} className="ml-[22px] text-[#1a5fb8]">
        <rect x="4" y="1" width="6" height="11.500" rx="3" />
        <path d="M1 9 Q1 15.500 7 15.500 T13 9 M7 15.500 V19" />
      </Icon>
      <div className="ml-[27px] w-[29px] text-center text-[13.800px] leading-[20px]">
        <div>ENG</div>
        <div>US</div>
      </div>
      <Icon w={21} h={16} sw={1.500} className="ml-[22px]">
        <path d="M1 6 Q10.500 -3.500 20 6 M4 9 Q10.500 2.500 17 9 M7 12 Q10.500 8.500 14 12" />
        <circle cx="10.500" cy="13.800" r="1" fill="currentColor" />
      </Icon>
      <Icon w={21} h={17} sw={1.300} className="ml-[9px]">
        <path d="M1 6 H4.500 L9.500 1.500 V15.500 L4.500 11 H1Z M12.500 6 Q14 8.500 12.500 11 M15 3.800 Q18 8.500 15 13.200 M17.500 1.500 Q22.500 8.500 17.500 15.500" />
      </Icon>
      <Icon w={21} h={14} sw={1.500} className="ml-[9px]">
        <rect x="1" y="1.500" width="16" height="11" rx="2.500" />
        <rect x="3.500" y="4" width="4" height="6" fill="currentColor" strokeWidth="1" />
        <path d="M19 5.500 V8.500" strokeWidth="2" />
      </Icon>
      <div className="ml-[19px] w-[78px] pb-[2px] text-right leading-[20px] whitespace-nowrap">
        <div>6:23 PM</div>
        <div className="text-[14.700px]">2024-01-11</div>
      </div>
      <Icon w={18} h={19} sw={1.500} className="mr-[26px] ml-[11px]">
        <path d="M1.500 14.500 L3.500 11.500 V7 Q4 1.200 9 1.200 T14.500 7 V11.500 L16.500 14.500Z M6.500 15 Q7 17.500 9 17.500 T11.500 15" />
      </Icon>
    </div>
  );
}

export default function App() {
  return (
    <div className="flex h-[1080px] w-[1920px] flex-col overflow-hidden bg-[#f7f7f7] font-['Open_Sans',sans-serif]">
      <TabBar />
      <Toolbar />
      <div className="flex h-[932px] shrink-0">
        <div className="ml-[5px] flex h-[928px] w-[1860px] shrink-0 overflow-hidden rounded-xl bg-white shadow-[0_0_2px_rgba(0,0,0,0.3)]">
          <div className="relative flex w-[1841px] shrink-0 flex-col bg-white font-[Lato,sans-serif] text-[#202122]">
            <div className="h-[5px] shrink-0 bg-[#e32526]" />
            <div className="absolute top-[5px] left-[1263px] h-[5px] w-[55px] rounded-b-[5px] bg-[#006fbf]" />
            <Header />
            <NavBar />
            <div className="h-[5px] shrink-0 bg-[#fafafa]" />
            <div className="flex items-start justify-between pt-[9px] pr-[210px] pl-[189px]">
              <h1 className="text-[50px] leading-[60px] tracking-[0.300px]">Test List</h1>
              <div className="mt-[11px] flex items-center gap-[7px] text-[17.500px] font-bold tracking-[0.200px] text-[#006fbf]">
                <svg width="22" height="22" viewBox="0 0 22 22">
                  <circle cx="11" cy="11" r="11" fill="#006fbf" />
                  <path d="M7.500 8.500 Q7.800 5.300 11 5.300 Q14.500 5.500 14.400 8.300 Q14.200 10.200 12 11.200 Q11 11.700 11 13" fill="none" stroke="#fff" strokeWidth="2.300" />
                  <circle cx="11" cy="16.400" r="1.500" fill="#fff" />
                </svg>
                Help
              </div>
            </div>
            <QuizTable />
            <Alerts />
          </div>
          <div className="flex w-[19px] shrink-0 flex-col items-center bg-[#fcfcfc] pt-[10px] pr-px pb-[9px]">
            <ScrollArrow up />
            <div className="mt-[9px] h-[287px] w-[11px] rounded-full bg-[#8b8b8b]" />
            <div className="mt-auto">
              <ScrollArrow />
            </div>
          </div>
        </div>
        <Sidebar />
      </div>
      <Taskbar />
    </div>
  );
}
